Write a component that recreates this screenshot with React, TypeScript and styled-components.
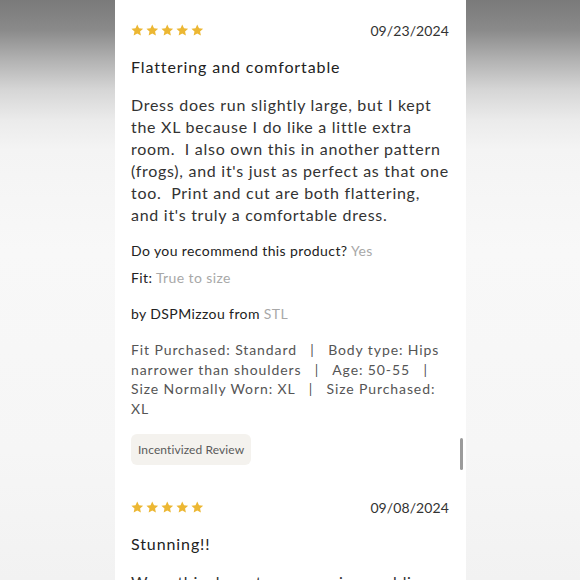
import React from "react";
import styled, { createGlobalStyle } from "styled-components";

const Global = createGlobalStyle`
  html, body {
    margin: 0;
    padding: 0;
    height: 580px;
    overflow: hidden;
  }
  body {
    background: linear-gradient(
      to bottom,
      #7a7a7a 0px,
      #8a8a8a 30px,
      #b2b2b2 60px,
      #d6d6d6 90px,
      #ebebeb 120px,
      #f4f4f4 150px,
      #f8f8f8 250px,
      #f6f6f6 450px,
      #f2f2f2 580px
    );
    font-family: "Lato", "Noto Sans", sans-serif;
    -webkit-font-smoothing: antialiased;
  }
`;

const Page = styled.div`
  display: flex;
  justify-content: center;
  height: 580px;
  overflow: hidden;
  padding-left: 1px;
`;

const Panel = styled.div`
  position: relative;
  width: 351px;
  box-sizing: border-box;
  background: #ffffff;
  padding: 0 17px 0 16px;
  height: 580px;
  overflow: hidden;
`;

const Scrollbar = styled.div`
  position: absolute;
  right: 3px;
  top: 438px;
  width: 3px;
  height: 32px;
  border-radius: 2px;
  background: #9b9b9b;
`;

const ReviewBlock = styled.section`
  padding: 20px 0 12px;
`;

const Header = styled.div`
  display: flex;
  justify-content: space-between;
  align-items: center;
  height: 20px;
`;

const Stars = styled.div`
  display: flex;
  gap: 2.5px;
  align-items: center;
`;

const Date = styled.span`
  font-size: 14px;
  color: #333333;
  letter-spacing: 0.1px;
`;

const Title = styled.h3`
  margin: 16px 0 0;
  font-size: 16px;
  line-height: 22px;
  font-weight: 400;
  color: #222222;
  letter-spacing: 0.9px;
`;

const Body = styled.p`
  margin: 16px 0 0;
  font-size: 16px;
  line-height: 22px;
  color: #333333;
  letter-spacing: 0.72px;
  white-space: pre;
`;

const Line = styled.div<{ $gap: number }>`
  margin-top: ${(p) => p.$gap}px;
  font-size: 14px;
  line-height: 20px;
  color: #222222;
  letter-spacing: 0.4px;
`;

const Muted = styled.span`
  color: #a8a8a8;
`;

const Specs = styled.p`
  margin: 16px 0 0;
  font-size: 14px;
  line-height: 19.5px;
  color: #555555;
  letter-spacing: 0.9px;
  white-space: pre;
`;

const Badge = styled.div`
  display: inline-flex;
  align-items: center;
  margin-top: 16px;
  height: 31px;
  padding: 0 7px;
  border-radius: 6px;
  background: #f4f2ee;
  font-size: 12px;
  color: #5a5a5a;
  letter-spacing: 0.1px;
`;

const Star = () => (
  <svg width="12.5" height="12" viewBox="0 0 24 23">
    <path
      d="M12 0.8l3.4 7.3 7.9 0.9-5.9 5.4 1.6 7.8L12 18.2l-6.9 4 1.6-7.8L0.8 9l7.9-0.9z"
      fill="#ecb733"
    />
  </svg>
);

type ReviewProps = {
  date: string;
  title: string;
  body: string;
  children?: React.ReactNode;
};

const Review = ({ date, title, body, children }: ReviewProps) => (
  <ReviewBlock>
    <Header>
      <Stars>
        {[0, 1, 2, 3, 4].map((i) => (
          <Star key={i} />
        ))}
      </Stars>
      <Date>{date}</Date>
    </Header>
    <Title>{title}</Title>
    <Body>{body}</Body>
    {children}
  </ReviewBlock>
);

export default function App() {
  return (
    <>
      <Global />
      <Page>
        <Panel>
          <Review
            date="09/23/2024"
            title="Flattering and comfortable"
            body={
              "Dress does run slightly large, but I kept\nthe XL because I do like a little extra\nroom.  I also own this in another pattern\n(frogs), and it's just as perfect as that one\ntoo.  Print and cut are both flattering,\nand it's truly a comfortable dress."
            }
          >
            <Line $gap={15}>
              Do you recommend this product? <Muted>Yes</Muted>
            </Line>
            <Line $gap={7}>
              Fit: <Muted>True to size</Muted>
            </Line>
            <Line $gap={16}>
              by DSPMizzou from <Muted>STL</Muted>
            </Line>
            <Specs>
              {
                "Fit Purchased: Standard   |   Body type: Hips\nnarrower than shoulders   |   Age: 50-55   |\nSize Normally Worn: XL   |   Size Purchased:\nXL"
              }
            </Specs>
            <Badge>Incentivized Review</Badge>
          </Review>
          <Review
            date="09/08/2024"
            title="Stunning!!"
            body="Wore this dress to my cousins wedding"
          />
          <Scrollbar />
        </Panel>
      </Page>
    </>
  );
}
